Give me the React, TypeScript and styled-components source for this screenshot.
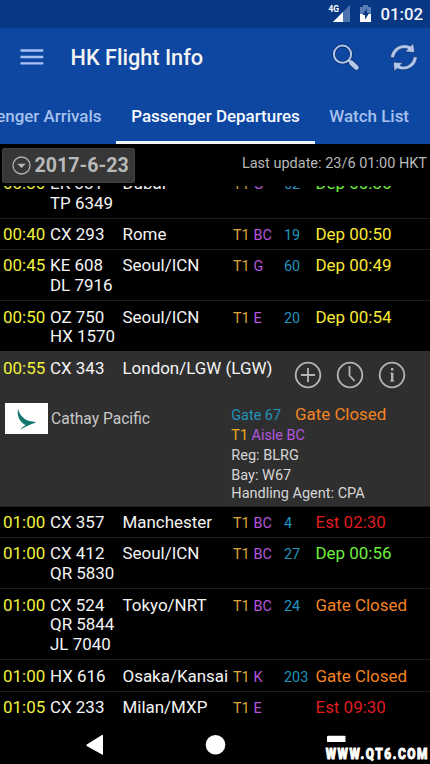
import React from 'react';
import styled, { createGlobalStyle } from 'styled-components';

const GlobalStyle = createGlobalStyle`
  * { box-sizing: border-box; }
  body { margin: 0; background: #000; font-family: Roboto, "Liberation Sans", sans-serif; }
`;

const Screen = styled.div`
  width: 430px;
  height: 764px;
  background: #000;
  color: #f4f4f4;
  overflow: hidden;
  display: flex;
  flex-direction: column;
  position: relative;
  white-space: nowrap;
`;

const StatusBar = styled.div`
  height: 28px;
  flex: none;
  background: #083884;
  display: flex;
  justify-content: flex-end;
  align-items: center;
  padding-right: 7px;
`;

const StatusIcons = styled.svg`
  width: 46px;
  height: 28px;
  margin-right: 6px;
`;

const Clock = styled.span`
  font-size: 16.8px;
  font-weight: 500;
  line-height: 28px;
  color: #f1f5fb;
`;

const SignalText = styled.text`
  font: 700 9px Roboto, sans-serif;
  fill: #fff;
`;

const AppBar = styled.header`
  height: 60px;
  flex: none;
  background: #0e47a1;
  display: flex;
  align-items: center;
  padding: 0 12px 0 20px;
`;

const MenuButton = styled.svg`
  width: 24px;
  height: 18px;
  margin-bottom: 2px;
`;

const Title = styled.h1`
  margin: 0 0 0 26.5px;
  font-size: 21.7px;
  font-weight: 500;
  line-height: 28px;
  flex: 1;
`;

const Actions = styled.div`
  display: flex;
  gap: 29px;
  padding-bottom: 2px;
`;

const ActionIcon = styled.svg`
  width: 29px;
  height: 30px;
  overflow: visible;
`;

const Tabs = styled.nav`
  height: 56px;
  flex: none;
  background: #0e47a1;
  display: flex;
`;

const Tab = styled.div<{ $active?: boolean; $width: number; $inset?: number }>`
  width: ${p => p.$width}px;
  padding-right: ${p => p.$inset ?? 0}px;
  display: flex;
  justify-content: ${p => (p.$active ? 'center' : 'flex-end')};
  font-size: 16.95px;
  font-weight: 500;
  line-height: 56px;
  color: ${p => (p.$active ? '#f7faff' : '#a6c1ee')};
  border-bottom: ${p => (p.$active ? '3px solid #eef4fc' : '0')};
`;

const Toolbar = styled.div`
  height: 42px;
  flex: none;
  display: flex;
  justify-content: space-between;
  padding: 4px 3px 0 2px;
`;

const DateButton = styled.div`
  width: 133px;
  height: 35px;
  border-radius: 2px;
  background: #373737;
  border: 1px solid #404040;
  display: flex;
  align-items: center;
  padding-left: 9px;
  gap: 3.5px;
  font-size: 19.6px;
  font-weight: 700;
  color: #b9b9b9;
`;

const DropIcon = styled.svg`
  width: 19px;
  height: 19px;
`;

const Updated = styled.div`
  font-size: 14.5px;
  line-height: 32px;
  color: #b9b9b9;
`;

const List = styled.main`
  height: 536px;
  flex: none;
  overflow: hidden;
  display: flex;
  flex-direction: column;
  font-size: 16.95px;
  line-height: 19.75px;
`;

const Row = styled.div<{ $codes: number; $scrolled?: boolean }>`
  flex: none;
  height: ${p => 11.7 + 19.75 * p.$codes}px;
  margin-top: ${p => (p.$scrolled ? '-19.7px' : '0')};
  padding: 6.5px 0 0 3px;
  border-top: 1px solid #1c1c1c;
  display: grid;
  grid-template-columns: 47px 72.5px 110.5px 20.5px 30.5px 31.5px auto;
  align-content: start;
  align-items: baseline;
`;

const Time = styled.span`
  color: #f1f23b;
`;

const Codes = styled.span`
  display: flex;
  flex-direction: column;
`;

const City = styled.span`
  color: #f4f4f4;
`;

const Small = styled.span<{ $tone: string }>`
  font-size: 14.4px;
  color: ${p => p.$tone};
`;

const Status = styled.span<{ $tone: string }>`
  color: ${p => p.$tone};
`;

const Expanded = styled.section`
  flex: none;
  height: 154.2px;
  background: #2f2f2f;
  display: flex;
  flex-direction: column;
`;

const Summary = styled.div`
  height: 51px;
  display: grid;
  grid-template-columns: 47px 72.5px 171px auto;
  padding: 7.5px 0 0 3px;
`;

const RoundActions = styled.div`
  display: flex;
  gap: 14.3px;
  padding-top: 2.5px;
`;

const RoundIcon = styled.svg`
  width: 28px;
  height: 28px;
  fill: none;
  stroke: #b5b5b5;
  stroke-width: 1.8;
`;

const Details = styled.div`
  display: grid;
  grid-template-columns: 226.3px auto;
  padding-left: 5px;
`;

const Airline = styled.div`
  display: flex;
  align-items: flex-start;
  gap: 3px;
  font-size: 15.6px;
  line-height: 34.5px;
  color: #c8c8c8;
`;

const Logo = styled.svg`
  width: 43px;
  height: 31px;
  margin-top: 0.8px;
  background: #fff;
`;

const Facts = styled.div`
  display: flex;
  flex-direction: column;
  font-size: 14.5px;
  color: #d6d6d6;
`;

const Fact = styled.div<{ $height: number }>`
  height: ${p => p.$height}px;
  line-height: ${p => p.$height}px;
  display: flex;
  align-items: baseline;
`;

const FactStatus = styled.span`
  font-size: 16.9px;
  color: #f38322;
  margin-left: 14px;
`;

const NavBar = styled.footer`
  height: 42px;
  display: flex;
`;

const NavIcons = styled.svg`
  width: 430px;
  height: 42px;
`;

const SiteMark = styled.div`
  position: absolute;
  right: 1px;
  bottom: 1px;
  font-size: 14.5px;
  line-height: 17px;
  font-weight: 900;
  letter-spacing: 1.9px;
  transform: scaleX(0.82);
  transform-origin: right;
  color: #fff;
  -webkit-text-stroke: 0.9px #fff;
`;

const YELLOW = '#fae936';
const GREEN = '#6cf03c';
const ORANGE = '#f38322';
const RED = '#df1c20';
const GOLD = '#dda63c';
const VIOLET = '#b456dd';
const TEAL = '#2094bc';

type Flight = {
  time: string;
  codes: string[];
  city: string;
  aisle: string;
  gate: string;
  status: string;
  tone: string;
};

const earlier: Flight[] = [
  { time: '00:30', codes: ['EK 381', 'TP 6349'], city: 'Dubai', aisle: 'G', gate: '62', status: 'Dep 00:36', tone: GREEN },
  { time: '00:40', codes: ['CX 293'], city: 'Rome', aisle: 'BC', gate: '19', status: 'Dep 00:50', tone: YELLOW },
  { time: '00:45', codes: ['KE 608', 'DL 7916'], city: 'Seoul/ICN', aisle: 'G', gate: '60', status: 'Dep 00:49', tone: YELLOW },
  { time: '00:50', codes: ['OZ 750', 'HX 1570'], city: 'Seoul/ICN', aisle: 'E', gate: '20', status: 'Dep 00:54', tone: YELLOW },
];

const later: Flight[] = [
  { time: '01:00', codes: ['CX 357'], city: 'Manchester', aisle: 'BC', gate: '4', status: 'Est 02:30', tone: RED },
  { time: '01:00', codes: ['CX 412', 'QR 5830'], city: 'Seoul/ICN', aisle: 'BC', gate: '27', status: 'Dep 00:56', tone: GREEN },
  { time: '01:00', codes: ['CX 524', 'QR 5844', 'JL 7040'], city: 'Tokyo/NRT', aisle: 'BC', gate: '24', status: 'Gate Closed', tone: ORANGE },
  { time: '01:00', codes: ['HX 616'], city: 'Osaka/Kansai', aisle: 'K', gate: '203', status: 'Gate Closed', tone: ORANGE },
  { time: '01:05', codes: ['CX 233'], city: 'Milan/MXP', aisle: 'E', gate: '', status: 'Est 09:30', tone: RED },
];

function FlightRow({ flight, scrolled }: { flight: Flight; scrolled?: boolean }) {
  return (
    <Row $codes={flight.codes.length} $scrolled={scrolled}>
      <Time>{flight.time}</Time>
      <Codes>{flight.codes.map(c => <span key={c}>{c}</span>)}</Codes>
      <City>{flight.city}</City>
      <Small $tone={GOLD}>T1</Small>
      <Small $tone={VIOLET}>{flight.aisle}</Small>
      <Small $tone={TEAL}>{flight.gate}</Small>
      <Status $tone={flight.tone}>{flight.status}</Status>
    </Row>
  );
}

const refreshArrow =
  'M390.8 57.5C391.3 48.5 401.5 41.7 411 46.1L413.8 43.1 414.9 52.6 405.3 51.8 408.1 49.1C401.5 46.6 395.3 51 394.7 58Z';

export default function App() {
  return (
    <>
      <GlobalStyle />
      <Screen>
        <StatusBar>
          <StatusIcons viewBox="328 0 46 28">
            <path d="M350 5V22H333Z" fill="#4c72b0" />
            <path d="M343 12V22H333Z" fill="#fff" />
            <path d="M326 3H340V10L337 13H326Z" fill="#083884" />
            <SignalText x="328.5" y="12" textLength="10.5" lengthAdjust="spacingAndGlyphs">4G</SignalText>
            <path d="M363 5h5v2h3v15h-11V7h3Z" fill="#5a7db6" />
            <path d="M360 14h11v8h-11Z" fill="#fff" />
            <path d="M366.8 8.5 362.5 15h2.5v4.5l4.3-6.5h-2.5Z" fill="#083884" />
          </StatusIcons>
          <Clock>01:02</Clock>
        </StatusBar>
        <AppBar>
          <MenuButton viewBox="0 0 24 18">
            <path d="M.5 2.5H23.3M.5 9H23.3M.5 15.3H23.3" stroke="#a9c2f5" strokeWidth="2.3" />
          </MenuButton>
          <Title>HK Flight Info</Title>
          <Actions>
            <ActionIcon viewBox="331.3 42 29 30">
              <circle cx="342.8" cy="54.2" r="8.6" fill="none" stroke="#0a2f70" strokeWidth="3.6" />
              <path d="M351 62.2 356.5 67.2" stroke="#0a2f70" strokeWidth="6.4" strokeLinecap="round" />
              <circle cx="342.8" cy="54.2" r="8.6" fill="none" stroke="#b4c6e8" strokeWidth="2" />
              <path d="m348.5 60 3 2.5" stroke="#b4c6e8" strokeWidth="2.4" />
              <path d="m351.8 62.9 4.9 4.5" stroke="#b4c6e8" strokeWidth="4.8" strokeLinecap="round" />
            </ActionIcon>
            <ActionIcon viewBox="389.3 42 29 30">
              <g fill="#b4c6e8" stroke="#0a2f70" strokeWidth=".7" strokeLinejoin="round">
                <path d={refreshArrow} />
                <path d={refreshArrow} transform="rotate(180 404.2 57.3)" />
              </g>
            </ActionIcon>
          </Actions>
        </AppBar>
        <Tabs>
          <Tab $width={116} $inset={14.5}>Passenger Arrivals</Tab>
          <Tab $width={199} $active>Passenger Departures</Tab>
          <Tab $width={115} $inset={21}>Watch List</Tab>
        </Tabs>
        <Toolbar>
          <DateButton>
            <DropIcon viewBox="0 0 19 19">
              <circle cx="9.5" cy="9.5" r="8.5" fill="none" stroke="#b5b5b5" strokeWidth="1.3" />
              <path d="M5.2 7.7H13.8L9.5 12Z" fill="#b5b5b5" />
            </DropIcon>
            2017-6-23
          </DateButton>
          <Updated>Last update: 23/6 01:00 HKT</Updated>
        </Toolbar>
        <List>
          {earlier.map((f, i) => <FlightRow key={i} flight={f} scrolled={i === 0} />)}
          <Expanded>
            <Summary>
              <Time>00:55</Time>
              <span>CX 343</span>
              <City>London/LGW (LGW)</City>
              <RoundActions>
                <RoundIcon viewBox="0 0 28 28">
                  <circle cx="14" cy="14" r="12.3" />
                  <path d="M14 7v14M7 14h14" />
                </RoundIcon>
                <RoundIcon viewBox="0 0 28 28">
                  <circle cx="14" cy="14" r="12.3" />
                  <path d="M13.5 5v9.5l5 5.5" />
                </RoundIcon>
                <RoundIcon viewBox="0 0 28 28">
                  <circle cx="14" cy="14" r="12.3" />
                  <path d="M14.2 7v2.6M14.2 11.8v8.4" strokeWidth="2.4" />
                  <path d="M12.2 12.3H14M12 20h4.4" strokeWidth="1" />
                </RoundIcon>
              </RoundActions>
            </Summary>
            <Details>
              <Airline>
                <Logo viewBox="0 0 43 31">
                  <path d="M13 5.5C14.5 11.5 18 16.3 24.5 17.9 26.5 18.1 28.5 18.3 31 19.5 25 21.5 20.5 23.5 15.3 26.7 16.5 24.5 19 23.3 20.5 22 15.5 19.8 11.5 13.5 13 5.5Z" fill="#13766d" />
                </Logo>
                Cathay Pacific
              </Airline>
              <Facts>
                <Fact $height={24}>
                  <Small $tone={TEAL}>Gate 67</Small>
                  <FactStatus>Gate Closed</FactStatus>
                </Fact>
                <Fact $height={19.5}>
                  <Small $tone="#eba91c">T1&nbsp;</Small>
                  <Small $tone={VIOLET}>Aisle BC</Small>
                </Fact>
                <Fact $height={20}>Reg: BLRG</Fact>
                <Fact $height={20}>Bay: W67</Fact>
                <Fact $height={15}>Handling Agent: CPA</Fact>
              </Facts>
            </Details>
          </Expanded>
          {later.map((f, i) => <FlightRow key={i} flight={f} />)}
        </List>
        <NavBar>
          <NavIcons viewBox="0 722 430 42" fill="#fff">
            <path d="M103 735.2V754.2Q103 755.2 102 754.6L86.7 746Q86 745.3 86.7 744.5L102 735Q103 734.4 103 735.2Z" />
            <circle cx="215.5" cy="744.8" r="9.8" />
            <path d="M327 742V736.5Q327 735.7 328 735.7H344.5Q345.5 735.7 345.5 736.5V742Z" />
          </NavIcons>
        </NavBar>
        <SiteMark>WWW.QT6.COM</SiteMark>
      </Screen>
    </>
  );
}
